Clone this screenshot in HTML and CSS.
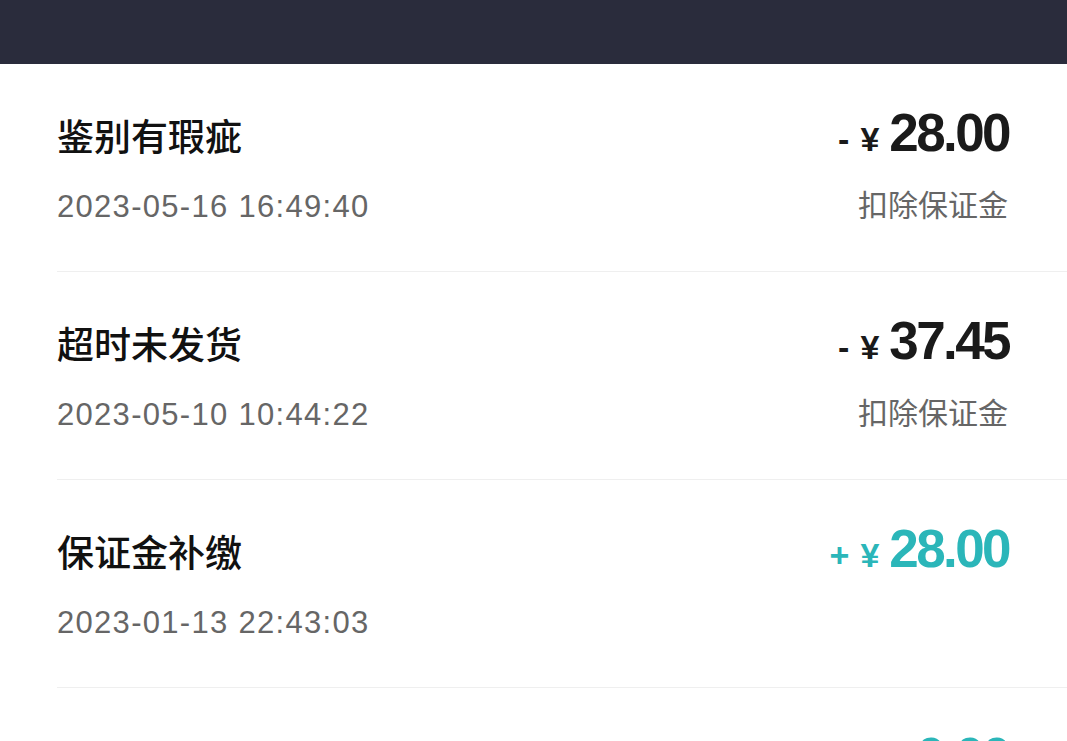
FILE: index.html
```html
<!DOCTYPE html>
<html lang="zh-CN">
<head>
  <meta charset="UTF-8" />
  <meta name="viewport" content="width=device-width, initial-scale=1.0" />
  <title>保证金明细</title>
  <link rel="stylesheet" href="styles.css">
</head>
<body>
  <!-- 顶部栏 -->
  <div class="topbar"></div>

  <!-- 明细列表 -->
  <div class="record-list">
    <div class="record">
      <div class="record-left">
        <div class="record-title">鉴别有瑕疵</div>
        <div class="record-time">2023-05-16 16:49:40</div>
      </div>
      <div class="record-right">
        <div class="amount"><span class="sign">-</span><span class="yen">¥</span><span class="num">28.00</span></div>
        <div class="record-type">扣除保证金</div>
      </div>
    </div>

    <div class="record">
      <div class="record-left">
        <div class="record-title">超时未发货</div>
        <div class="record-time">2023-05-10 10:44:22</div>
      </div>
      <div class="record-right">
        <div class="amount"><span class="sign">-</span><span class="yen">¥</span><span class="num">37.45</span></div>
        <div class="record-type">扣除保证金</div>
      </div>
    </div>

    <div class="record">
      <div class="record-left">
        <div class="record-title">保证金补缴</div>
        <div class="record-time">2023-01-13 22:43:03</div>
      </div>
      <div class="record-right">
        <div class="amount plus"><span class="sign">+</span><span class="yen">¥</span><span class="num">28.00</span></div>
      </div>
    </div>

    <!-- 最后一条只露出金额顶部 -->
    <div class="record">
      <div class="record-left"></div>
      <div class="record-right">
        <div class="amount plus"><span class="sign">+</span><span class="yen">¥</span><span class="num">0.00</span></div>
      </div>
    </div>
  </div>
</body>
</html>
```

FILE: styles.css
```css
body {
  margin: 0;
  background: #fff;
  font-family: "Noto Sans CJK SC", "Noto Sans", sans-serif;
  overflow: hidden;
}

.topbar {
  height: 64px;
  background: #2a2c3c;
}

.record-list {
  padding-left: 57px;
}

.record {
  display: flex;
  justify-content: space-between;
  height: 208px;
  box-sizing: border-box;
  padding-right: 59px;
  border-bottom: 1px solid #efefef;
}

.record-left {
  padding-top: 49px;
}

.record-title {
  font-size: 37px;
  line-height: 44px;
  font-weight: 500;
  color: #111;
}

.record-time {
  margin-top: 30px;
  font-family: "Liberation Sans", "Noto Sans CJK SC", sans-serif;
  font-size: 31px;
  line-height: 40px;
  color: #666;
  letter-spacing: 1.3px;
}

.record-right {
  padding-top: 41px;
  display: flex;
  flex-direction: column;
  align-items: flex-end;
}

.amount {
  display: flex;
  align-items: baseline;
  height: 56px;
  line-height: 56px;
  color: #1a1a1a;
  font-family: "Liberation Sans Narrow", "Liberation Sans", sans-serif;
  font-weight: bold;
}

.amount .sign {
  font-size: 34px;
  margin-right: 11px;
}

.amount .yen {
  font-size: 34px;
  margin-right: 10px;
}

.amount .num {
  font-size: 53px;
  letter-spacing: -2.6px;
  margin-right: -1px;
}

.amount.plus {
  color: #2bb6b9;
}

.record-type {
  margin-top: 22px;
  font-size: 30px;
  line-height: 40px;
  color: #666;
}
```
